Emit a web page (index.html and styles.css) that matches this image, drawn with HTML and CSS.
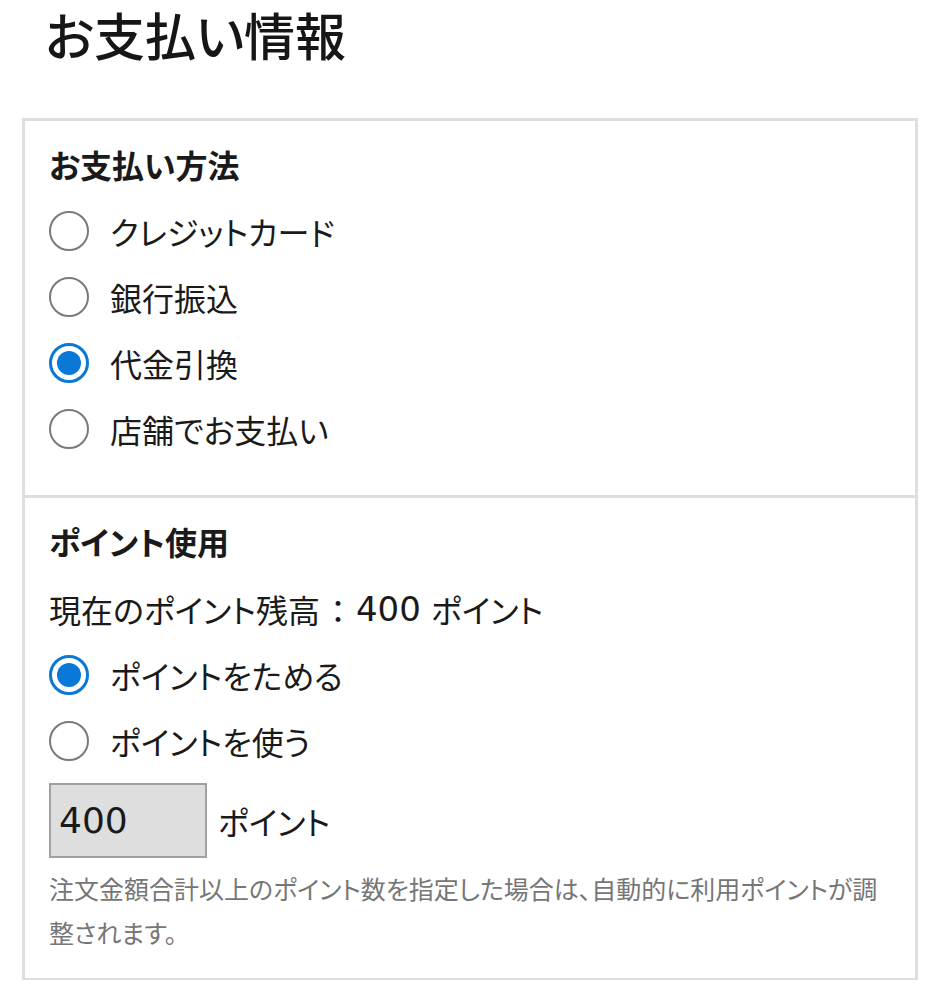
FILE: index.html
```html
<!DOCTYPE html>
<html lang="ja">
<head>
<meta charset="utf-8">
<title>お支払い情報</title>
<link rel="stylesheet" href="styles.css">
</head>
<body>
<main class="page">
  <h1 class="title">お支払い情報</h1>
  <div class="panel">
    <section class="section">
      <h2 class="section-title">お支払い方法</h2>
      <ul class="options">
        <li class="option"><span class="radio"></span><span class="option-label">クレジットカード</span></li>
        <li class="option"><span class="radio"></span><span class="option-label">銀行振込</span></li>
        <li class="option"><span class="radio is-checked"></span><span class="option-label">代金引換</span></li>
        <li class="option"><span class="radio"></span><span class="option-label">店舗でお支払い</span></li>
      </ul>
    </section>
    <section class="section">
      <h2 class="section-title">ポイント使用</h2>
      <p class="balance">現在のポイント残高<span class="colon">：</span><span class="num">400</span> ポイント</p>
      <ul class="options">
        <li class="option"><span class="radio is-checked"></span><span class="option-label">ポイントをためる</span></li>
        <li class="option"><span class="radio"></span><span class="option-label">ポイントを使う</span></li>
      </ul>
      <div class="points-field">
        <input class="points-input" type="text" value="400" disabled>
        <span class="points-unit">ポイント</span>
      </div>
      <p class="note">注文金額合計以上のポイント数を指定した場合は、自動的に利用ポイントが調整されます。</p>
    </section>
  </div>
</main>
</body>
</html>
```
FILE: styles.css
```css
* {
  box-sizing: border-box;
}

html, body {
  margin: 0;
  padding: 0;
  background: #ffffff;
}

body {
  font-family: "DejaVu Sans", "Noto Sans CJK JP", sans-serif;
  font-feature-settings: "palt";
  color: #1a1a1a;
}

.page {
  padding: 9px 22px 0 22px;
  width: 940px;
}

.title {
  margin: 0 0 49px 0;
  padding-left: 23px;
  font-size: 51px;
  line-height: 60px;
  font-weight: 500;
  color: #161616;
}

.panel {
  width: 896px;
  border: 3px solid #dedede;
  border-bottom-width: 2px;
}

.section {
  padding: 22px 24px 33px 24px;
}

.section + .section {
  border-top: 3px solid #dedede;
  padding-top: 22px;
  padding-bottom: 21px;
}

.section-title {
  margin: 0 0 7px 0;
  font-size: 32px;
  line-height: 48px;
  font-weight: 700;
}

.section + .section .section-title {
  margin-bottom: 8px;
}

.options {
  list-style: none;
  margin: 0;
  padding: 0;
}

.option {
  display: flex;
  align-items: center;
  height: 66px;
  gap: 21px;
  font-size: 32px;
}

.radio {
  position: relative;
  flex: none;
  width: 40px;
  height: 40px;
  border: 2px solid #7a7a7a;
  border-radius: 50%;
  background: #ffffff;
}

.radio.is-checked {
  border: 3px solid #0a78d7;
}

.radio.is-checked::after {
  content: "";
  position: absolute;
  left: 5px;
  top: 5px;
  width: 24px;
  height: 24px;
  border-radius: 50%;
  background: #0a78d7;
}

.balance {
  margin: 0;
  height: 66px;
  display: flex;
  align-items: center;
  font-size: 32px;
  white-space: pre;
}

.colon {
  font-feature-settings: normal;
  padding: 0 2px;
}

.num {
  font-size: 34px;
}

.points-field {
  display: flex;
  align-items: center;
  gap: 11px;
  margin-top: 9px;
}

.points-input {
  width: 158px;
  height: 75px;
  margin: 0;
  padding: 0 8px;
  border: 2px solid #a0a0a0;
  background: #dedede;
  font-family: "DejaVu Sans", sans-serif;
  font-size: 36px;
  color: #1a1a1a;
  -webkit-text-fill-color: #1a1a1a;
  opacity: 1;
}

.points-unit {
  font-size: 32px;
}

.note {
  margin: 11px 0 0 0;
  font-size: 25px;
  line-height: 44px;
  color: #767676;
}
```
